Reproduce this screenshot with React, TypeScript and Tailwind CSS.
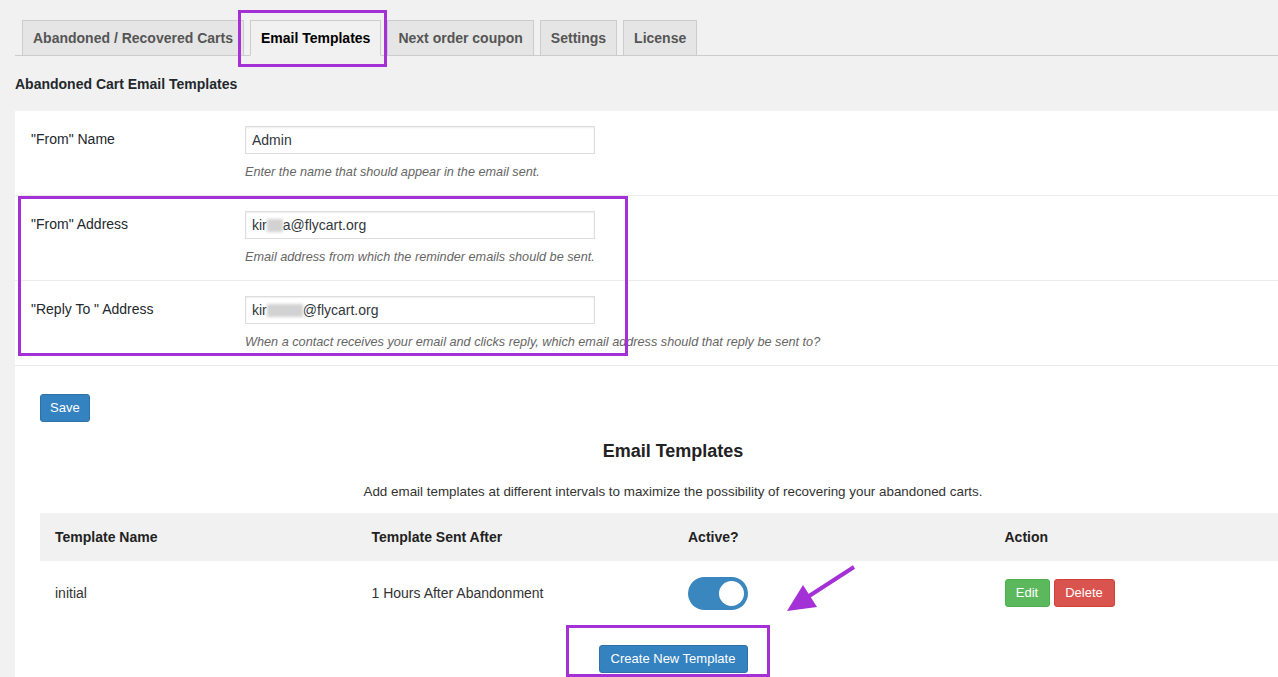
import React from 'react';

const tabs = ['Abandoned / Recovered Carts', 'Email Templates', 'Next order coupon', 'Settings', 'License'];

const Blurred: React.FC<{ wide?: boolean }> = ({ wide }) => (
  <span
    className={`inline-block align-middle h-[13px] bg-[#d2d2d2] blur-[1.5px] ${wide ? 'w-[36px]' : 'w-[16px]'}`}
  />
);

const FieldRow: React.FC<{ label: string; help: string; children: React.ReactNode }> = ({ label, help, children }) => (
  <div className="flex border-b border-[#ebebeb] pl-[16px] pt-[15px] pb-[14px]">
    <div className="w-[214px] shrink-0 pt-[3px] text-[14px] leading-[20px] text-[#23282d]">{label}</div>
    <div>
      <div className="w-[350px] h-[28px] border border-[#dddddd] shadow-[inset_0_1px_2px_rgba(0,0,0,0.07)] px-[6px] flex items-center text-[14px] text-[#32373c]">
        {children}
      </div>
      <p className="mt-[9px] text-[12.7px] leading-[18px] italic text-[#666]">{help}</p>
    </div>
  </div>
);

export default function App() {
  return (
    <div className="relative w-[1278px] h-[677px] overflow-hidden bg-[#f1f1f1] font-['Liberation_Sans',Arial,sans-serif] text-[#23282d]">
      {/* tabs */}
      <div className="pt-[20px] pl-[15px]">
        <div className="flex gap-[6px] pl-[7px] border-b border-[#cccccc] w-[1400px]">
          {tabs.map((t, i) => (
            <div
              key={t}
              className={`h-[36px] -mb-px px-[10px] flex items-center text-[14px] font-bold border border-[#cccccc] ${
                i === 1 ? 'bg-[#f1f1f1] border-b-[#f1f1f1] text-black' : 'bg-[#e5e5e5] text-[#555]'
              }`}
            >
              {t}
            </div>
          ))}
        </div>
      </div>

      <h2 className="pl-[15px] mt-[18px] text-[14px] leading-[20px] font-bold text-[#23282d]">Abandoned Cart Email Templates</h2>

      {/* white panel */}
      <div className="ml-[15px] mt-[17px] w-[1400px] bg-white h-[600px]">
        <FieldRow label={'"From" Name'} help="Enter the name that should appear in the email sent.">
          Admin
        </FieldRow>
        <FieldRow label={'"From" Address'} help="Email address from which the reminder emails should be sent.">
          kir<Blurred />a@flycart.org
        </FieldRow>
        <FieldRow
          label={'"Reply To " Address'}
          help="When a contact receives your email and clicks reply, which email address should that reply be sent to?"
        >
          kir<Blurred wide />@flycart.org
        </FieldRow>

        <div className="pl-[25px] pt-[28px] w-[1291px]">
          <button className="h-[28px] px-[9px] rounded-[3px] bg-[#3582c0] border border-[#2e72a8] text-white text-[13px]">
            Save
          </button>

          <div className="w-[1266px] text-center">
            <h3 className="mt-[17px] text-[18px] leading-[24px] font-bold text-[#222]">Email Templates</h3>
            <p className="mt-[20px] text-[13.4px] leading-[18px] text-[#333]">
              Add email templates at different intervals to maximize the possibility of recovering your abandoned carts.
            </p>

            <div className="mt-[12px] text-left">
              <div className="grid grid-cols-4 h-[48px] items-center bg-[#f1f1f1] text-[14px] font-bold text-[#222]">
                <div className="pl-[15px]">Template Name</div>
                <div className="pl-[15px]">Template Sent After</div>
                <div className="pl-[15px]">Active?</div>
                <div className="pl-[15px]">Action</div>
              </div>
              <div className="grid grid-cols-4 h-[64px] items-center text-[14px] text-[#333]">
                <div className="pl-[15px]">initial</div>
                <div className="pl-[15px]">1 Hours After Abandonment</div>
                <div className="pl-[15px]">
                  <div className="w-[60px] h-[33px] rounded-full bg-[#3a86bf] flex items-center justify-end pr-[4px]">
                    <div className="w-[25px] h-[25px] rounded-full bg-white" />
                  </div>
                </div>
                <div className="pl-[15px] flex gap-[4px]">
                  <button className="h-[28px] w-[45px] rounded-[3px] bg-[#5cb85c] border border-[#4cae4c] text-white text-[13px]">
                    Edit
                  </button>
                  <button className="h-[28px] w-[61px] rounded-[3px] bg-[#d9534f] border border-[#d43f3a] text-white text-[13px]">
                    Delete
                  </button>
                </div>
              </div>
            </div>

            <button className="mt-[20px] h-[28px] w-[149px] rounded-[3px] bg-[#3582c0] border border-[#2e72a8] text-white text-[13px]">
              Create New Template
            </button>
          </div>
        </div>
      </div>

      {/* annotations */}
      <div className="absolute left-[238px] top-[10px] w-[149px] h-[57px] border-[3px] border-[#a431d6]" />
      <div className="absolute left-[18px] top-[196px] w-[610px] h-[160px] border-[3px] border-[#a431d6]" />
      <div className="absolute left-[566px] top-[625px] w-[204px] h-[52px] border-[3px] border-[#a431d6]" />
      <svg className="absolute left-0 top-0" width="1278" height="677" viewBox="0 0 1278 677">
        <line x1="854" y1="567" x2="806" y2="598" stroke="#a431d6" strokeWidth="4" />
        <polygon points="787,611 803,585 817,607" fill="#a431d6" />
      </svg>
    </div>
  );
}
